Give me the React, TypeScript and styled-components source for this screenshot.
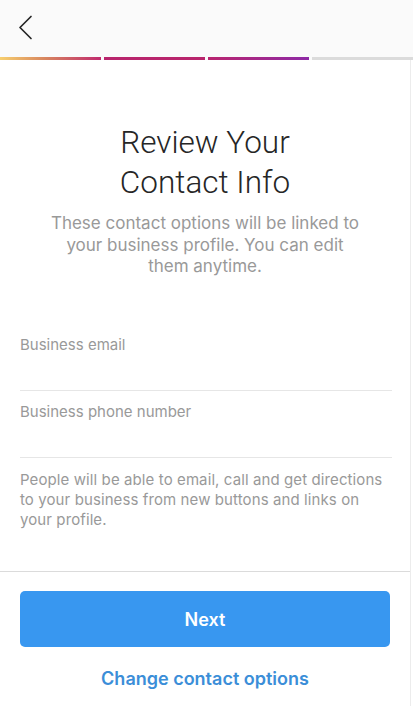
import React from 'react';
import styled, { createGlobalStyle } from 'styled-components';

const GlobalStyle = createGlobalStyle`
  html, body {
    margin: 0;
    padding: 0;
    background: #fff;
  }
  body {
    font-family: Inter, "Liberation Sans", Arial, sans-serif;
    -webkit-font-smoothing: antialiased;
  }
  * {
    box-sizing: border-box;
  }
`;

const steps = [
  'linear-gradient(90deg, #f7cf6e 0%, #d7855f 45%, #c02a6e 100%)',
  '#b8246c',
  'linear-gradient(90deg, #b9256f 0%, #8e2aa5 100%)',
  '#dbdbdb',
];

const App: React.FC = () => {
  return (
    <Page>
      <GlobalStyle />
      <Header>
        <BackButton aria-label="Back">
          <svg width="15" height="25" viewBox="0 0 15 25" fill="none">
            <path d="M13 1.5L2 12.5L13 23.5" stroke="#262626" strokeWidth="1.7" strokeLinecap="round" strokeLinejoin="round" />
          </svg>
        </BackButton>
      </Header>
      <Progress>
        {steps.map((bg, i) => (
          <Step key={i} $bg={bg} />
        ))}
      </Progress>
      <Body>
        <Content>
          <Title>
            Review Your
            <br />
            Contact Info
          </Title>
          <Subtitle>
            These contact options will be linked to your business profile. You can edit them anytime.
          </Subtitle>
          <Fields>
            <Field>
              <Label>Business email</Label>
            </Field>
            <Field>
              <Label>Business phone number</Label>
            </Field>
          </Fields>
          <Help>
            People will be able to email, call and get directions to your business from new buttons and links on your profile.
          </Help>
        </Content>
        <Footer>
          <NextButton>Next</NextButton>
          <LinkButton>Change contact options</LinkButton>
        </Footer>
      </Body>
    </Page>
  );
};

export default App;

const Page = styled.div`
  display: flex;
  flex-direction: column;
  width: 413px;
  height: 706px;
  overflow: hidden;
  background: #fff;
`;

const Header = styled.div`
  height: 57px;
  background: #fafafa;
  display: flex;
  align-items: center;
  padding-left: 18px;
  padding-bottom: 3px;
`;

const BackButton = styled.button`
  border: none;
  background: none;
  padding: 0;
  display: flex;
  cursor: pointer;
`;

const Progress = styled.div`
  display: grid;
  grid-template-columns: repeat(4, 1fr);
  gap: 3px;
  height: 3px;
  background: #fafafa;
`;

const Step = styled.div<{ $bg: string }>`
  height: 3px;
  background: ${({ $bg }) => $bg};
`;

const Body = styled.div`
  flex: 1;
  display: flex;
  flex-direction: column;
  width: 411px;
  border-right: 1px solid #ececec;
`;

const Content = styled.div`
  padding: 63px 20px 0 20px;
  flex: 1;
`;

const Title = styled.h1`
  margin: 0;
  text-align: center;
  font-family: Roboto, "Liberation Sans", Arial, sans-serif;
  font-size: 31.5px;
  line-height: 40px;
  font-weight: 300;
  color: #262626;
`;

const Subtitle = styled.p`
  margin: 10px auto 0;
  max-width: 316px;
  text-align: center;
  font-size: 17px;
  line-height: 21.5px;
  color: #999;
`;

const Fields = styled.div`
  margin-top: 46px;
`;

const Field = styled.div`
  height: 67px;
  padding-top: 12px;
  border-bottom: 1px solid #e6e6e6;
  margin-right: -2px;
`;

const Label = styled.div`
  font-size: 15px;
  line-height: 18px;
  color: #999;
`;

const Help = styled.p`
  margin: 12px 0 0;
  font-size: 15px;
  line-height: 20px;
  letter-spacing: 0.1px;
  color: #999;
`;

const Footer = styled.div`
  border-top: 1px solid #dbdbdb;
  padding: 19px 20px 0;
  height: 135px;
  display: flex;
  flex-direction: column;
  align-items: center;
`;

const NextButton = styled.button`
  width: 100%;
  height: 56px;
  border: none;
  border-radius: 5px;
  background: #3897f0;
  color: #fff;
  font-family: inherit;
  font-size: 18px;
  font-weight: 600;
  cursor: pointer;
`;

const LinkButton = styled.button`
  margin-top: 21px;
  border: none;
  background: none;
  padding: 0;
  font-family: inherit;
  font-size: 18px;
  line-height: 22px;
  font-weight: 600;
  color: #3b8ed8;
  cursor: pointer;
`;
